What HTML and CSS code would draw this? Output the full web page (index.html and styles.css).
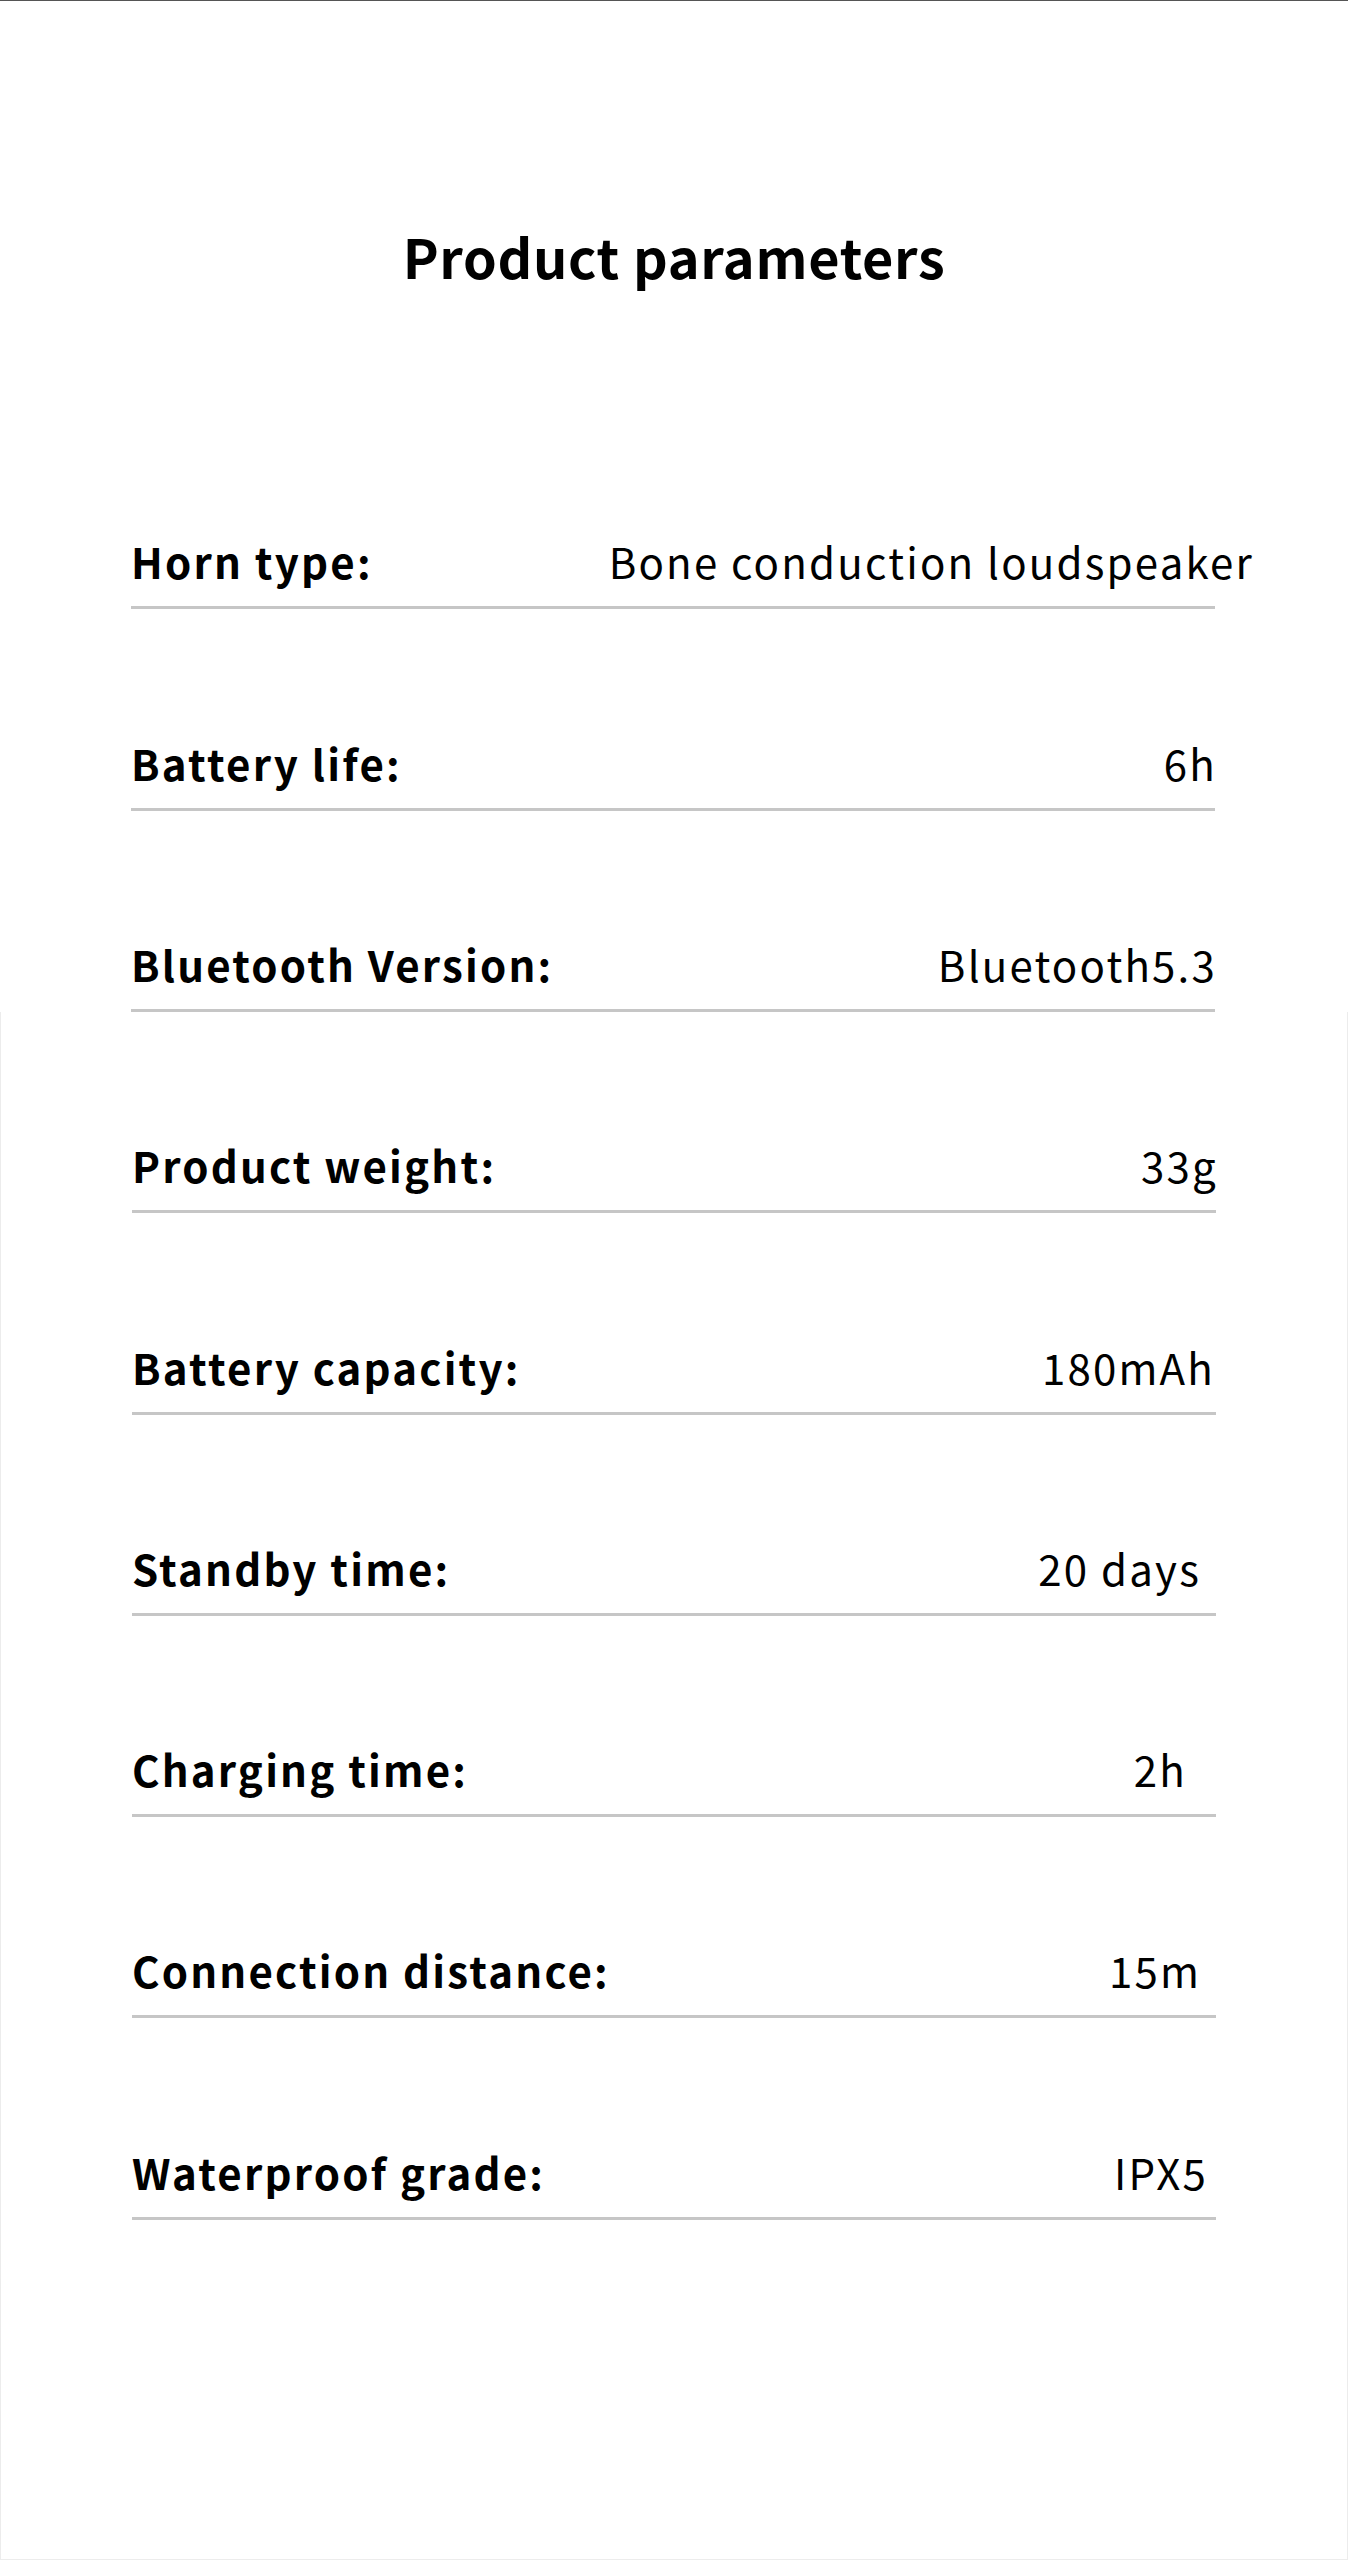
FILE: index.html
```html
<!DOCTYPE html>
<html>
<head>
    <title>Product parameters</title>
    <link rel="stylesheet" href="styles.css">
</head>
<body>
    <div class="panel panel-top">
        <h1 class="title">Product parameters</h1>
        <div class="specs">
            <div class="row">
                <span class="label">Horn type:</span>
                <span class="value overflow">Bone conduction loudspeaker</span>
            </div>
            <div class="row">
                <span class="label">Battery life:</span>
                <span class="value">6h</span>
            </div>
            <div class="row">
                <span class="label">Bluetooth Version:</span>
                <span class="value">Bluetooth5.3</span>
            </div>
        </div>
    </div>

    <div class="panel panel-bottom">
        <div class="specs">
            <div class="row">
                <span class="label">Product weight:</span>
                <span class="value">33g</span>
            </div>
            <div class="row">
                <span class="label">Battery capacity:</span>
                <span class="value inset-xs">180mAh</span>
            </div>
            <div class="row">
                <span class="label">Standby time:</span>
                <span class="value inset-md">20 days</span>
            </div>
            <div class="row">
                <span class="label">Charging time:</span>
                <span class="value inset-lg">2h</span>
            </div>
            <div class="row">
                <span class="label">Connection distance:</span>
                <span class="value inset-md">15m</span>
            </div>
            <div class="row">
                <span class="label">Waterproof grade:</span>
                <span class="value inset-sm">IPX5</span>
            </div>
        </div>
    </div>
</body>
</html>
```

FILE: styles.css
```css
body {
    margin: 0;
    background: #fff;
    color: #000;
    font-family: "Noto Sans CJK SC", "Noto Sans", sans-serif;
}
.panel {
    width: 1348px;
    box-sizing: border-box;
}
.panel-top {
    height: 1012px;
    border-top: 1px solid #555;
}
.panel-bottom {
    height: 1548px;
    border: 1px solid #ececec;
    border-top: none;
}
.title {
    margin: 222px 0 0;
    font-size: 54px;
    line-height: 65px;
    font-weight: 700;
    letter-spacing: 0.7px;
    text-align: center;
}
.specs {
    width: 1084px;
    margin-left: 131px;
}
.panel-top .specs {
    margin-top: 120px;
}
.row {
    display: flex;
    justify-content: space-between;
    align-items: flex-end;
    box-sizing: border-box;
    height: 201.3px;
    padding-bottom: 20px;
    border-bottom: 3px solid #c6c6c6;
}
.label {
    font-size: 42px;
    line-height: 50px;
    font-weight: 700;
    letter-spacing: 2.2px;
}
.value {
    font-size: 42px;
    line-height: 50px;
    font-weight: 400;
    letter-spacing: 2.2px;
    margin-right: -2px;
}
.overflow {
    margin-right: -39px;
}
.inset-xs {
    margin-right: 1px;
}
.inset-sm {
    margin-right: 8px;
}
.inset-md {
    margin-right: 15px;
}
.inset-lg {
    margin-right: 29px;
}
```
